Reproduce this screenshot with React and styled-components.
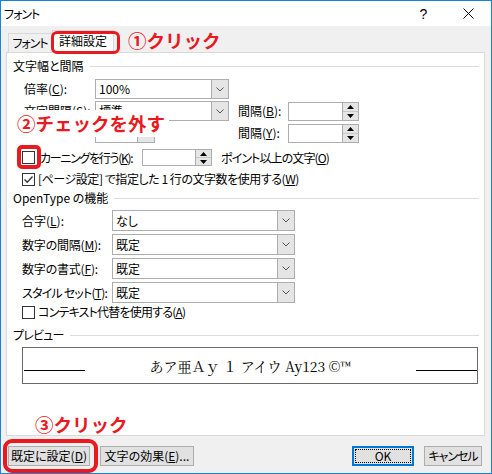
import React from "react";
import styled, { createGlobalStyle } from "styled-components";

const Global = createGlobalStyle`
  html, body { margin: 0; padding: 0; background: #fff; }
  body { width: 492px; height: 474px; overflow: hidden; }
`;

const UI_FONT = `"Noto Sans CJK JP", "Noto Sans", sans-serif`;

const Window = styled.div`
  position: relative;
  width: 492px;
  height: 474px;
  box-sizing: border-box;
  border: 1px solid #1883d7;
  background: #f0f0f0;
  display: flex;
  flex-direction: column;
  font-family: ${UI_FONT};
  font-feature-settings: "palt" 1;
  font-size: 12px;
  color: #000;
`;

const TitleBar = styled.div`
  height: 25px;
  background: #fff;
  display: flex;
  align-items: center;
  padding-left: 3px;
`;

const Title = styled.div`
  flex: 1;
  line-height: 14px;
  letter-spacing: -1px;
`;

const TitleButton = styled.div`
  width: 45px;
  height: 25px;
  display: flex;
  align-items: center;
  justify-content: center;
  font-family: "Liberation Sans", sans-serif;
  font-size: 14px;
`;

const Body = styled.div`
  flex: 1;
  display: flex;
  flex-direction: column;
  padding: 0 6px 0 5px;
`;

const TabBar = styled.div`
  height: 26px;
  display: flex;
  align-items: flex-end;
  padding-left: 2px;
`;

const Tab = styled.div`
  box-sizing: border-box;
  width: ${(p) => p.$w}px;
  height: ${(p) => (p.$active ? "23px" : "19px")};
  padding: ${(p) => (p.$active ? "2px 0 0" : "1px 0 0")};
  margin-bottom: ${(p) => (p.$active ? "-1px" : "0")};
  border: 1px solid #d9d9d9;
  border-bottom: none;
  background: ${(p) => (p.$active ? "#fff" : "#f0f0f0")};
  position: relative;
  z-index: ${(p) => (p.$active ? 1 : 0)};
  line-height: 16px;
  text-align: center;
  letter-spacing: ${(p) => p.$ls || 0}px;
  white-space: nowrap;
`;

const Panel = styled.div`
  box-sizing: border-box;
  height: 384px;
  border: 1px solid #d9d9d9;
  background: #fff;
  display: flex;
  flex-direction: column;
`;

const SectionHeader = styled.div`
  display: flex;
  align-items: center;
  height: 14px;
  line-height: 14px;
  margin: ${(p) => p.$mt}px 5px 0 6px;
  letter-spacing: ${(p) => p.$ls || 0}px;
  &::after {
    content: "";
    flex: 1;
    height: 1px;
    background: #dcdcdc;
    margin-left: 6px;
  }
`;

const SpacingGrid = styled.div`
  display: grid;
  grid-template-columns: 71px 143px 50px 71px;
  grid-auto-rows: 20px;
  row-gap: 2px;
  margin: 6px 0 0 17px;
  align-items: center;
`;

const OpenTypeGrid = styled.div`
  display: grid;
  grid-template-columns: 90px 183px;
  grid-auto-rows: 21px;
  row-gap: 3px;
  margin: 5px 0 0 15px;
  align-items: center;
`;

const Label = styled.div`
  white-space: nowrap;
  line-height: 14px;
  letter-spacing: ${(p) => p.$ls || 0}px;
`;

const Combo = styled.div`
  box-sizing: border-box;
  width: ${(p) => p.$w}px;
  height: ${(p) => p.$h || 20}px;
  border: 1px solid #adadad;
  background: #fff;
  display: flex;
  align-items: stretch;
`;

const ComboValue = styled.div`
  flex: 1;
  padding-left: 3px;
  line-height: ${(p) => (p.$h ? p.$h - 2 : 18)}px;
  overflow: hidden;
  white-space: nowrap;
`;

const DropButton = styled.div`
  width: 16px;
  background: #e5e5e5;
  border-left: 1px solid #adadad;
  display: flex;
  align-items: center;
  justify-content: center;
`;

const Spinner = styled.div`
  box-sizing: border-box;
  width: ${(p) => p.$w}px;
  height: ${(p) => p.$h}px;
  border: 1px solid #adadad;
  background: #fff;
  display: flex;
  justify-content: flex-end;
  flex-shrink: 0;
`;

const SpinButtons = styled.div`
  width: 15px;
  display: flex;
  flex-direction: column;
  border-left: 1px solid #adadad;
`;

const SpinHalf = styled.div`
  flex: 1;
  background: #e5e5e5;
  display: flex;
  align-items: center;
  justify-content: center;
  & + & { border-top: 1px solid #c8c8c8; }
`;

const CheckRow = styled.div`
  display: flex;
  align-items: center;
  height: ${(p) => p.$h}px;
  margin: ${(p) => p.$mt}px 0 0 15px;
  white-space: nowrap;
`;

const CheckBox = styled.div`
  box-sizing: border-box;
  width: 13px;
  height: 13px;
  border: 1px solid #333;
  background: #fff;
  display: flex;
  align-items: center;
  justify-content: center;
  flex-shrink: 0;
`;

const CheckText = styled.div`
  margin-left: ${(p) => p.$ml}px;
  width: ${(p) => (p.$w ? `${p.$w}px` : "auto")};
  flex-shrink: 0;
  line-height: 14px;
  letter-spacing: ${(p) => p.$ls || 0}px;
`;

const Preview = styled.div`
  box-sizing: border-box;
  height: 37px;
  margin: 5px 6px 0 15px;
  border: 1px solid #696969;
  display: flex;
  align-items: flex-end;
  padding: 0 0 9px 1px;
`;

const PreviewLine = styled.div`
  width: 61px;
  height: 1px;
  background: #000;
  margin-bottom: 3px;
`;

const PreviewText = styled.div`
  flex: 1;
  text-align: center;
  font-family: "Noto Serif CJK JP", "Liberation Serif", "Noto Sans CJK JP", serif;
  font-feature-settings: normal;
  font-size: 14px;
  line-height: 16px;
  white-space: nowrap;
`;

const Footer = styled.div`
  display: flex;
  align-items: center;
  height: 20px;
  margin-top: 10px;
  padding: 0 3px 0 2px;
  gap: 10px;
`;

const Button = styled.div`
  box-sizing: border-box;
  width: ${(p) => p.$w}px;
  height: 20px;
  margin-left: ${(p) => (p.$push ? "auto" : "0")};
  border: ${(p) => (p.$primary ? "2px solid #0078d7" : "1px solid #adadad")};
  background: #e1e1e1;
  display: flex;
  align-items: center;
  justify-content: center;
  padding: ${(p) => (p.$primary ? "1px" : "0")};
  line-height: 14px;
  white-space: nowrap;
  letter-spacing: ${(p) => p.$ls || 0}px;
`;

const FocusRect = styled.div`
  box-sizing: border-box;
  width: 100%;
  height: 100%;
  border: 1px dotted #000;
  display: flex;
  align-items: center;
  justify-content: center;
`;

const Note = styled.div`
  position: absolute;
  left: ${(p) => p.$x}px;
  top: ${(p) => p.$y}px;
  width: ${(p) => (p.$w ? `${p.$w}px` : "auto")};
  height: ${(p) => (p.$h ? `${p.$h}px` : "auto")};
  padding-left: ${(p) => p.$pl || 0}px;
  box-sizing: border-box;
  background: ${(p) => p.$bg || "transparent"};
  color: #e8191f;
  font-weight: 700;
  font-size: 18.5px;
  font-feature-settings: normal;
  line-height: ${(p) => p.$lh || 20}px;
  white-space: nowrap;
  z-index: 5;
`;

const Ring = styled.div`
  position: absolute;
  left: ${(p) => p.$x}px;
  top: ${(p) => p.$y}px;
  width: ${(p) => p.$w}px;
  height: ${(p) => p.$h}px;
  box-sizing: border-box;
  border: ${(p) => p.$t}px solid #e8191f;
  border-radius: ${(p) => p.$r}px;
  z-index: 6;
`;

const Chevron = () => (
  <svg width="8" height="5" viewBox="0 0 8 5">
    <polyline points="0.5,0.5 4,4 7.5,0.5" fill="none" stroke="#555" strokeWidth="1" />
  </svg>
);

const Up = () => (
  <svg width="7" height="4" viewBox="0 0 7 4">
    <polygon points="3.5,0 7,4 0,4" fill="#000" />
  </svg>
);
const Down = () => (
  <svg width="7" height="4" viewBox="0 0 7 4">
    <polygon points="0,0 7,0 3.5,4" fill="#000" />
  </svg>
);

const Check = () => (
  <svg width="11" height="11" viewBox="0 0 11 11">
    <polyline points="1.5,5.5 4.2,8.3 9.5,2.5" fill="none" stroke="#333" strokeWidth="1.3" />
  </svg>
);

const Select = ({ w, h, value }) => (
  <Combo $w={w} $h={h}>
    <ComboValue $h={h}>{value}</ComboValue>
    <DropButton>
      <Chevron />
    </DropButton>
  </Combo>
);

const Spin = ({ w, h }) => (
  <Spinner $w={w} $h={h}>
    <SpinButtons>
      <SpinHalf><Up /></SpinHalf>
      <SpinHalf><Down /></SpinHalf>
    </SpinButtons>
  </Spinner>
);

const K = ({ children }) => <u>{children}</u>;

export default function App() {
  return (
    <>
      <Global />
      <Window>
        <TitleBar>
          <Title>フォント</Title>
          <TitleButton>?</TitleButton>
          <TitleButton>
            <svg width="11" height="11" viewBox="0 0 11 11">
              <path d="M0.5 0.5 L10.5 10.5 M10.5 0.5 L0.5 10.5" stroke="#000" strokeWidth="1" />
            </svg>
          </TitleButton>
        </TitleBar>
        <Body>
          <TabBar>
            <Tab $w={44} $ls={-1}>フォント</Tab>
            <Tab $active $w={62}>詳細設定</Tab>
          </TabBar>
          <Panel>
            <SectionHeader $mt={6}>文字幅と間隔</SectionHeader>
            <SpacingGrid>
              <Label>倍率(<K>C</K>):</Label>
              <Select w={134} value="100%" />
              <span />
              <span />
              <Label>文字間隔(<K>S</K>):</Label>
              <Select w={134} value="標準" />
              <Label>間隔(<K>B</K>):</Label>
              <Spin w={71} h={19} />
              <span />
              <Select w={60} value="" />
              <Label>間隔(<K>Y</K>):</Label>
              <Spin w={71} h={19} />
            </SpacingGrid>
            <CheckRow $h={17} $mt={6}>
              <CheckBox />
              <CheckText $ml={5} $w={102} $ls={-1.3}>カーニングを行う(<K>K</K>):</CheckText>
              <Spin w={70} h={17} />
              <CheckText $ml={9} $ls={-0.9}>ポイント以上の文字(<K>O</K>)</CheckText>
            </CheckRow>
            <CheckRow $h={16} $mt={5}>
              <CheckBox><Check /></CheckBox>
              <CheckText $ml={3} $ls={-0.45}>[ページ設定] で指定した 1 行の文字数を使用する(<K>W</K>)</CheckText>
            </CheckRow>
            <SectionHeader $mt={4}>OpenType の機能</SectionHeader>
            <OpenTypeGrid>
              <Label>合字(<K>L</K>):</Label>
              <Select w={183} h={21} value="なし" />
              <Label $ls={-0.2}>数字の間隔(<K>M</K>):</Label>
              <Select w={183} h={21} value="既定" />
              <Label $ls={-0.2}>数字の書式(<K>F</K>):</Label>
              <Select w={183} h={21} value="既定" />
              <Label $ls={-0.8}>スタイル セット(<K>T</K>):</Label>
              <Select w={183} h={21} value="既定" />
            </OpenTypeGrid>
            <CheckRow $h={16} $mt={1}>
              <CheckBox />
              <CheckText $ml={3} $ls={-0.8}>コンテキスト代替を使用する(<K>A</K>)</CheckText>
            </CheckRow>
            <SectionHeader $mt={8} $ls={-0.8}>プレビュー</SectionHeader>
            <Preview>
              <PreviewLine />
              <PreviewText>あア亜Ａｙ １ アイウ Ay123 ©™</PreviewText>
              <PreviewLine />
            </Preview>
          </Panel>
          <Footer>
            <Button $w={82}>既定に設定(<K>D</K>)</Button>
            <Button $w={94}>文字の効果(<K>E</K>)...</Button>
            <Button $w={62} $push $primary>
              <FocusRect>OK</FocusRect>
            </Button>
            <Button $w={58} $ls={-1}>キャンセル</Button>
          </Footer>
        </Body>

        <Ring $x={50} $y={30} $w={69} $h={23} $t={3} $r={6} />
        <Note $x={127} $y={29}>①クリック</Note>
        <Note $x={6} $y={109} $w={162} $h={27} $pl={10} $bg="#fff" $lh={27}>②チェックを外す</Note>
        <Ring $x={16} $y={144} $w={24} $h={24} $t={4} $r={5} />
        <Note $x={34} $y={413}>③クリック</Note>
        <Ring $x={2} $y={438} $w={95} $h={34} $t={4} $r={9} />
      </Window>
    </>
  );
}
